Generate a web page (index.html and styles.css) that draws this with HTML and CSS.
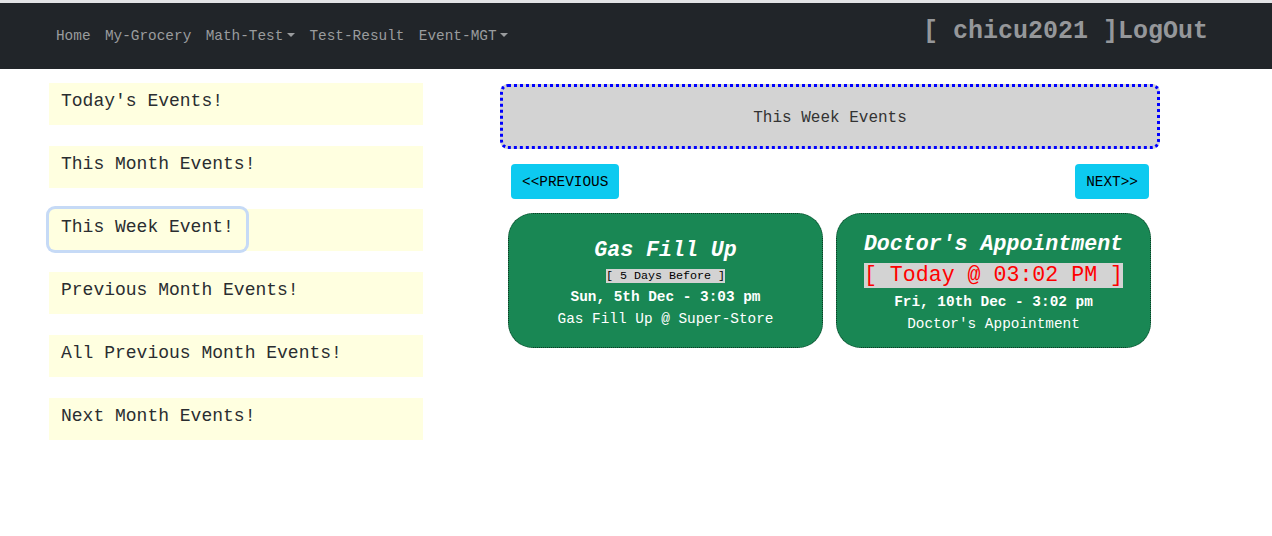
FILE: index.html
```html
<!DOCTYPE html>
<html lang="en">
<head>
<meta charset="utf-8">
<title>Events</title>
<link rel="stylesheet" href="styles.css">
</head>
<body>
<nav class="topbar">
  <ul class="nav-links">
    <li><a class="nav-link" href="#">Home</a></li>
    <li><a class="nav-link" href="#">My-Grocery</a></li>
    <li><a class="nav-link dropdown" href="#">Math-Test</a></li>
    <li><a class="nav-link" href="#">Test-Result</a></li>
    <li><a class="nav-link dropdown" href="#">Event-MGT</a></li>
  </ul>
  <div class="user">[ chicu2021 ]LogOut</div>
</nav>
<div class="page">
  <aside class="sidebar">
    <div class="side-item"><button class="side-btn">Today's Events!</button></div>
    <div class="side-item"><button class="side-btn">This Month Events!</button></div>
    <div class="side-item"><button class="side-btn focused">This Week Event!</button></div>
    <div class="side-item"><button class="side-btn">Previous Month Events!</button></div>
    <div class="side-item"><button class="side-btn">All Previous Month Events!</button></div>
    <div class="side-item"><button class="side-btn">Next Month Events!</button></div>
  </aside>
  <main class="main">
    <div class="banner">This Week Events</div>
    <div class="pager">
      <button class="pager-btn">&lt;&lt;PREVIOUS</button>
      <button class="pager-btn">NEXT&gt;&gt;</button>
    </div>
    <div class="cards">
      <div class="card">
        <div class="card-title">Gas Fill Up</div>
        <div class="badge-row"><span class="badge">[ 5 Days Before ]</span></div>
        <div class="card-date">Sun, 5th Dec - 3:03 pm</div>
        <div class="card-desc">Gas Fill Up @ Super-Store</div>
      </div>
      <div class="card">
        <div class="card-title">Doctor's Appointment</div>
        <div class="badge-row"><span class="badge today">[ Today @ 03:02 PM ]</span></div>
        <div class="card-date">Fri, 10th Dec - 3:02 pm</div>
        <div class="card-desc">Doctor's Appointment</div>
      </div>
    </div>
  </main>
</div>
</body>
</html>
```
FILE: styles.css
```css
* { box-sizing: border-box; }
body {
  margin: 0;
  border-top: 3px solid #e2e3e5;
  font-family: "Liberation Mono", "Courier New", monospace;
  color: #212529;
  background: #fff;
}
.topbar {
  height: 66px;
  background: #212529;
  display: flex;
  align-items: center;
  justify-content: space-between;
  padding: 0 64px 0 48.8px;
}
.nav-links {
  list-style: none;
  margin: 0;
  padding: 0;
  display: flex;
}
.nav-link {
  display: block;
  padding: 0 7.2px;
  font-size: 14.4px;
  line-height: 22px;
  color: #9a9c9e;
  text-decoration: none;
}
.dropdown::after {
  content: "";
  display: inline-block;
  margin-left: 3.7px;
  vertical-align: 3px;
  border-top: 4.3px solid #9a9c9e;
  border-left: 4.3px solid transparent;
  border-right: 4.3px solid transparent;
}
.user {
  font-size: 25px;
  font-weight: bold;
  color: #95979a;
  line-height: 30px;
  margin-bottom: 8px;
}
.page {
  display: flex;
  align-items: flex-start;
  padding-top: 14px;
}
.sidebar {
  margin-left: 49px;
  width: 374px;
  display: flex;
  flex-direction: column;
  gap: 21px;
}
.side-item {
  height: 42px;
  background: #ffffe0;
}
.side-btn {
  height: 41px;
  padding: 0 12px 5px;
  border: 0;
  background: transparent;
  border-radius: 6px;
  font-family: "Liberation Mono", "Courier New", monospace;
  font-size: 18px;
  color: #2a2d30;
  cursor: pointer;
}
.side-btn.focused {
  box-shadow: 0 0 0 3px #c6daf6;
}
.main {
  margin-left: 77px;
  width: 660px;
  margin-top: 1px;
}
.banner {
  height: 65px;
  background: #d3d3d3;
  border: 3px dotted #0000ff;
  border-radius: 8px;
  display: flex;
  align-items: center;
  justify-content: center;
  font-size: 16px;
  color: #333;
  padding-top: 2px;
}
.pager {
  display: flex;
  justify-content: space-between;
  padding: 0 11px;
  margin-top: 15px;
}
.pager-btn {
  height: 35px;
  padding: 0 11px;
  border: 0;
  border-radius: 4px;
  background: #0dcaf0;
  color: #000;
  font-family: "Liberation Mono", "Courier New", monospace;
  font-size: 14.4px;
}
.cards {
  display: flex;
  gap: 13px;
  padding-left: 8px;
  margin-top: 14px;
}
.card {
  width: 315px;
  height: 135px;
  background: #198754;
  border: 1px dotted #0d3b25;
  border-radius: 25px;
  display: flex;
  flex-direction: column;
  align-items: center;
  justify-content: center;
  color: #fff;
  text-align: center;
  padding-top: 5px;
}
.card-title {
  font-size: 21.6px;
  font-weight: bold;
  font-style: italic;
  line-height: 26px;
}
.badge-row {
  margin: 6px 0 3px;
  line-height: 0;
}
.badge {
  display: inline-block;
  background: #d3d3d3;
  color: #000;
  font-size: 11.7px;
  line-height: 14px;
}
.badge.today {
  color: #ff0000;
  font-size: 21.6px;
  line-height: 25px;
}
.card-date {
  font-size: 14.4px;
  font-weight: bold;
  line-height: 22px;
}
.card-desc {
  font-size: 14.4px;
  line-height: 22px;
}
```
